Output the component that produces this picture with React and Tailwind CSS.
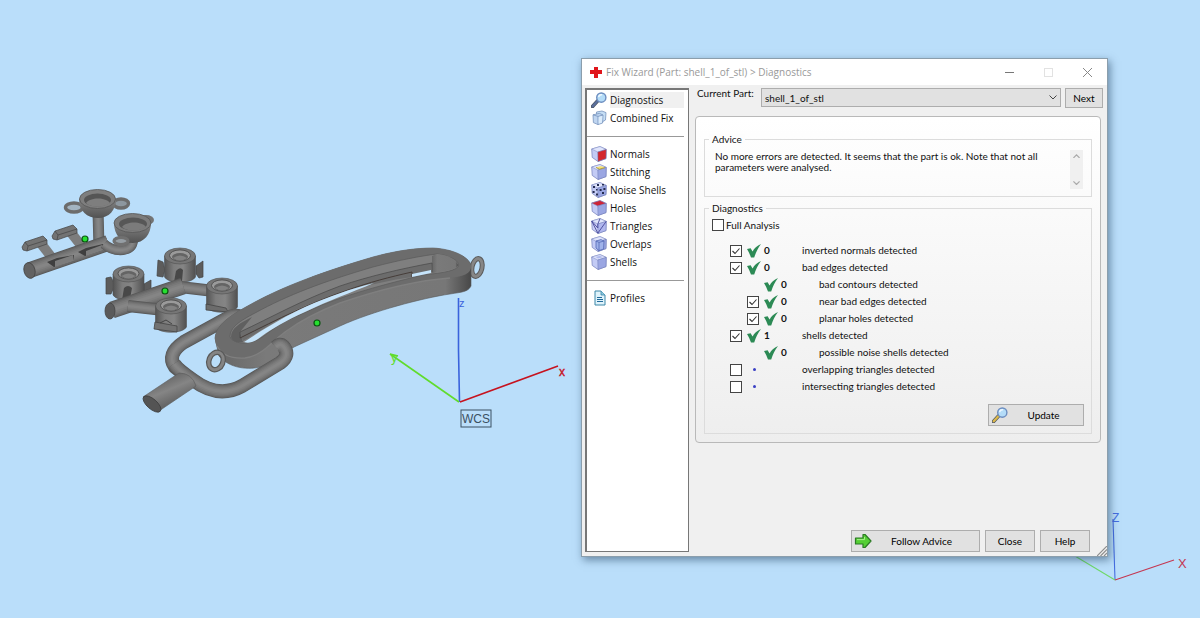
import React from 'react';

const Magnifier = ({ handle = '#5b6f9c' }) => (
    <svg viewBox="0 0 16 16" className="w-4 h-4 shrink-0">
        <path d="M1.5 14.5 L6.5 9" stroke="#4b5563" strokeWidth="3.6" strokeLinecap="round" />
        <path d="M1.7 14.2 L6.5 9" stroke={handle} strokeWidth="2.4" strokeLinecap="round" />
        <circle cx="10.3" cy="5.6" r="4.6" fill="#b4dcf8" stroke="#6d8ec0" strokeWidth="1.4" />
        <path d="M7.6 5.2 a3 3 0 0 1 3.4 -2.4" stroke="#eef8ff" strokeWidth="1.4" fill="none" />
    </svg>
);

const Cube = ({ front = '#c3cbf5', side = '#9aa6e2', top = '#e0e5fc', children }) => (
    <svg viewBox="0 0 16 16" className="w-4 h-4 shrink-0">
        <path d="M0.7 3 L9 0.6 L15.2 3.4 L15 12.6 L7 15.5 L1.2 11.4 Z" fill={front} stroke="#7480ba" strokeWidth="0.7" />
        <path d="M0.7 3 L9 0.6 L15.2 3.4 L6.8 6 Z" fill={top} stroke="#7f8ac2" strokeWidth="0.5" />
        <path d="M6.8 6 L15.2 3.4 L15 12.6 L7 15.5 Z" fill={side} stroke="#6d79b5" strokeWidth="0.5" />
        {children}
    </svg>
);

const CombinedIcon = () => (
    <svg viewBox="0 0 16 16" className="w-4 h-4 shrink-0">
        <path d="M5.5 2 L11 1 L15 2.6 L14.5 10 L11 12 L5.5 10 Z" fill="#c5def5" stroke="#7793bd" strokeWidth="0.8" />
        <path d="M2 4.8 L8.5 3.4 L12 5 L11.6 13 L7 14.6 L2.4 12.6 Z" fill="#bfd5f0" stroke="#7793bd" strokeWidth="0.8" />
        <path d="M2 4.8 L7 6.4 L12 5 M7 6.4 L7 14.6" fill="none" stroke="#7793bd" strokeWidth="0.8" />
        <path d="M7.6 7 L11.4 5.8 L11 12.6 L7.6 13.8 Z" fill="#dcecfb" />
    </svg>
);

const ProfilesIcon = () => (
    <svg viewBox="0 0 16 16" className="w-4 h-4 shrink-0">
        <path d="M4 1 H10 L14 5 V15 H4 Z" fill="#dff3fb" stroke="#3d87a8" />
        <path d="M10 1 V5 H14" fill="#8ecbe0" stroke="#3d87a8" strokeWidth="0.8" />
        <path d="M6 7.5 H11 M6 9.5 H12 M6 11.5 H12" stroke="#226a9a" strokeWidth="1.2" />
    </svg>
);

const fixItems = [
    { name: 'Normals', icon: <Cube side="#d3262c" /> },
    {
        name: 'Stitching',
        icon: (
            <Cube>
                <path d="M5 3.6 L9 5.2 L14.4 3.6 L10 2 Z" fill="#f3e27a" />
                <path d="M5 3.4 L8.4 5.2 L14 3.6" fill="none" stroke="#a8953a" strokeWidth="0.9" />
            </Cube>
        ),
    },
    {
        name: 'Noise Shells',
        icon: (
            <Cube>
                <path
                    d="M2 4h2v2h-2z M6 2h2v2h-2z M11 2h2v1.6h-2z M12.4 6h2v2h-2z M8.6 7h2v2h-2z M1.6 9h2v2h-2z M5 11.6h2v2h-2z M11 10h2v2h-2z M5 7h1.6v1.6h-1.6z"
                    fill="#252c52"
                />
            </Cube>
        ),
    },
    { name: 'Holes', icon: <Cube top="#cf2336" /> },
    {
        name: 'Triangles',
        icon: (
            <Cube front="#ccd0f6" side="#b0b7ee">
                <path d="M0.7 3 L6.8 15.2 L15.2 3.4 M0.7 3 L6.8 10 L6.8 6 M9 0.6 L6.8 6" fill="none" stroke="#46479a" strokeWidth="0.9" />
            </Cube>
        ),
    },
    {
        name: 'Overlaps',
        icon: (
            <Cube>
                <path d="M5 5 L10 3.6 L13 5 L12.6 13 L8 14.6 L5 12 Z" fill="#9fb2ea" stroke="#5468b5" strokeWidth="0.8" />
                <path d="M8 6.4 L13 5 M8 6.4 V14.6 M5 5 L8 6.4" stroke="#5468b5" strokeWidth="0.8" />
            </Cube>
        ),
    },
    {
        name: 'Shells',
        icon: (
            <Cube>
                <path d="M4.4 3 L9 1.8 L12 3.2 L7 4.6 Z" fill="#b2bcee" />
            </Cube>
        ),
    },
];

const checks = [
    { label: 'inverted normals detected', count: 0, box: true, on: true },
    { label: 'bad edges detected', count: 0, box: true, on: true },
    { label: 'bad contours detected', count: 0, nested: true },
    { label: 'near bad edges detected', count: 0, box: true, on: true, nested: true },
    { label: 'planar holes detected', count: 0, box: true, on: true, nested: true },
    { label: 'shells detected', count: 1, box: true, on: true },
    { label: 'possible noise shells detected', count: 0, nested: true },
    { label: 'overlapping triangles detected', box: true },
    { label: 'intersecting triangles detected', box: true },
];

const CheckBox = ({ id, on }) => (
    <span className="grid w-3 h-3 shrink-0">
        <input
            id={id}
            type="checkbox"
            defaultChecked={on}
            className="peer appearance-none col-start-1 row-start-1 w-3 h-3 bg-white border border-[#444]"
        />
        <svg viewBox="0 0 12 12" className="col-start-1 row-start-1 w-3 h-3 pointer-events-none invisible peer-checked:visible">
            <path d="M2.5 6 L5 8.5 L9.5 3.5" fill="none" stroke="#333" strokeWidth="1.1" />
        </svg>
    </span>
);

const GreenCheck = () => (
    <svg viewBox="0 0 14 14" className="w-3.5 h-3.5 shrink-0">
        <path d="M0 5 L3.6 4.2 L5.6 7.6 C7 4.4 10 1.6 14 0 C11 4 8.8 8.4 7.2 13.6 L4 13.6 C3 10.6 1.8 8 0 5 Z" fill="#2c8a55" />
    </svg>
);

const CheckRow = ({ row, id }) => (
    <li className={`flex items-center h-[17px] ${row.nested ? 'pl-[42px]' : 'pl-[25px]'}`}>
        {row.box ? <CheckBox id={id} on={row.on} /> : <span className="w-3" />}
        <span className="flex justify-center w-4 ml-1">
            {row.count === undefined ? <span className="w-[3px] h-[3px] rounded-full bg-[#3a3fc4]" /> : <GreenCheck />}
        </span>
        <span className="w-10 pl-[2px] font-bold">{row.count}</span>
        <label htmlFor={row.box ? id : undefined}>{row.label}</label>
    </li>
);

// A tube drawn as stacked strokes, dark at the rim and lighter towards the middle
const Tube = ({ d, w }) => (
    <g fill="none" strokeLinejoin="round">
        <path d={d} stroke="#585858" strokeWidth={w} />
        <path d={d} stroke="#666" strokeWidth={w * 0.9} />
        <path d={d} stroke="#707070" strokeWidth={w * 0.75} />
        <path d={d} stroke="#787878" strokeWidth={w * 0.58} />
        <path d={d} stroke="#7f7f7f" strokeWidth={w * 0.4} />
        <path d={d} stroke="#858585" strokeWidth={w * 0.2} />
    </g>
);

const Marker = ({ x, y }) => <circle cx={x} cy={y} r="3" fill="#25e02f" stroke="#0b5410" strokeWidth="1.2" />;

const Cylinder = ({ x, y }) => (
    <g transform={`translate(${x} ${y})`}>
        <path d="M-15.5 0 V21 C-12 28 12 28 15.5 21 V0 Z" fill="url(#round)" stroke="#505050" strokeWidth="0.6" />
        <ellipse rx="15.5" ry="8" fill="#767676" stroke="#505050" strokeWidth="0.6" />
        <ellipse cy="-0.5" rx="10.5" ry="5.6" fill="#9a9a9a" stroke="#454545" strokeWidth="0.8" />
        <ellipse cy="1" rx="8" ry="4" fill="#646464" />
        <path d="M-7 2 Q0 -3 7 2 Q0 7 -7 2 Z" fill="#828282" />
    </g>
);

const SmallBar = ({ x, y }) => (
    <g transform={`translate(${x} ${y})`} stroke="#444" strokeWidth="0.7">
        <path d="M13 5 L24 19 L34 16 L24 3 Z" fill="#7c7c7c" stroke="none" />
        <path d="M0 8 L3 3 L21 -3 L25 1 L25 5 L5 12 L1 11 Z" fill="#737373" />
        <path d="M3 3 L6 7 L25 1 M6 7 L5 12" fill="none" />
    </g>
);

const Scene = () => (
    <svg viewBox="0 0 1200 618" preserveAspectRatio="xMinYMin meet" className="block w-full h-full" fontFamily="Liberation Sans, sans-serif">
        <defs>
            <linearGradient id="round">
                <stop offset="0" stopColor="#535353" />
                <stop offset="0.3" stopColor="#7d7d7d" />
                <stop offset="0.6" stopColor="#858585" />
                <stop offset="1" stopColor="#505050" />
            </linearGradient>
            <linearGradient id="bowl" x2="0" y2="1">
                <stop offset="0" stopColor="#848484" />
                <stop offset="1" stopColor="#525252" />
            </linearGradient>
            <linearGradient id="stem" x1="0.2" y1="0" x2="0.8" y2="1">
                <stop offset="0.15" stopColor="#636363" />
                <stop offset="0.45" stopColor="#858585" />
                <stop offset="0.85" stopColor="#585858" />
            </linearGradient>
            <linearGradient id="wall">
                <stop offset="0" stopColor="#666" />
                <stop offset="0.2" stopColor="#7a7a7a" />
                <stop offset="0.9" stopColor="#777" />
                <stop offset="1" stopColor="#484848" />
            </linearGradient>
        </defs>

        {/* sprue with two cups */}
        <g>
            <Tube d="M98 212 L99 246" w={11} />
            <ellipse cx="74" cy="207.500" rx="8.500" ry="4.500" fill="#a3b4c1" stroke="#6c6c6c" strokeWidth="3.4" />
            <ellipse cx="121" cy="203.500" rx="7.500" ry="4.500" fill="#8d979f" stroke="#6c6c6c" strokeWidth="3.4" />
            <path d="M79 199 C79 211 87 218 98 218 C109 218 116 210 116 199 Z" fill="url(#bowl)" />
            <ellipse cx="97.500" cy="199" rx="18" ry="9.500" fill="#7e7e7e" stroke="#555" strokeWidth="0.8" />
            <ellipse cx="97.500" cy="200" rx="13.500" ry="6.500" fill="#555" />
            <path d="M86 203 C90 197 106 197 110 203 C104 208 91 208 86 203 Z" fill="#7e7e7e" />
            <SmallBar x={22} y={239} />
            <SmallBar x={52} y={228} />
            <Tube d="M30 270 L108 243" w={16} />
            <ellipse cx="29.500" cy="270.500" rx="5.500" ry="8" fill="#626262" stroke="#444" strokeWidth="0.8" transform="rotate(-15 29.500 270.500)" />
            <path d="M47 262 L57 258 L74 255 L74 261 L54 267 Z M78 252 L86 248 L103 244 L104 250 L85 256 Z" fill="#3f3f3f" />
            <path d="M55 261 L73 255 L74 261 L55 267 Z M86 251 L102 245 L104 250 L86 256 Z" fill="#7c7c7c" />
            <Tube d="M104 244 Q112 251 123 250 Q132 249 133 241" w={10} />
            <ellipse cx="146" cy="220" rx="8" ry="5" fill="#737373" />
            <path d="M114 223 C114 236 122 243 133 243 C144 243 151 234 151 223 Z" fill="url(#bowl)" />
            <ellipse cx="132.500" cy="223" rx="18.500" ry="9.500" fill="#7c7c7c" stroke="#555" strokeWidth="0.8" />
            <ellipse cx="133" cy="224" rx="14" ry="6.500" fill="#575757" />
            <path d="M122 227 C126 221 142 221 146 227 C139 232 128 232 122 227 Z" fill="#7b7b7b" />
            <ellipse cx="121" cy="241" rx="7" ry="3.500" fill="#969ea4" stroke="#707070" strokeWidth="3.2" />
            <Marker x={85} y={239} />
        </g>

        {/* sprue with four bushings */}
        <g>
            <path d="M106 278 L111 277 L114 283 L114 287 L111 294 L106 294 Z M144 284 L151 280 V289 L144 291 Z" fill="#5c5c5c" stroke="#444" strokeWidth="0.7" />
            <path d="M158 260 L163 262 L165 270 L163 277 L157 276 Z M196 266 L203 261 V277 L199 278 L196 274 Z" fill="#5c5c5c" stroke="#444" strokeWidth="0.7" />
            <Cylinder x={128.5} y={274} />
            <Cylinder x={180} y={256} />
            <path d="M124 288 Q128 284 132 288 L130 299 L122 300 Z M176 271 Q180 266 183 270 L182 281 L174 282 Z" fill="#484848" />
            <Tube d="M180 287 L214 291" w={12} />
            <Tube d="M112 310 L183 286" w={17} />
            <Tube d="M128 306 L164 310" w={12} />
            <ellipse cx="110" cy="311" rx="5" ry="8" fill="#5a5a5a" stroke="#444" strokeWidth="0.8" />
            <Cylinder x={222} y={286} />
            <path d="M206 304 L226 308 L228 312 L206 310 Z" fill="#6c6c6c" stroke="#444" strokeWidth="0.8" />
            <Cylinder x={171} y={306} />
            <path d="M155 322 L177 326 L177 332 L154 329 Z" fill="#727272" stroke="#444" strokeWidth="0.8" />
            <path d="M160 323 L166 320 L172 324" fill="none" stroke="#444" />
            <Marker x={165} y={291} />
        </g>

        {/* long slotted frame, its handle and rings */}
        <g>
            <ellipse cx="477" cy="267.500" rx="5" ry="9" fill="none" stroke="#5a5a5a" strokeWidth="5" transform="rotate(12 477 267.500)" />
            <ellipse cx="477" cy="267.500" rx="5" ry="9" fill="none" stroke="#868686" strokeWidth="3" transform="rotate(12 477 267.500)" />
            <Tube d="M243 318 Q236 313 226 319 L184 342 Q166 354 175 367 L184 374" w={14} />
            <path
                d="M215 338 C217 322 235 313 255 302 C285 286 322 272 373 257 C395 251 415 248 433 248 C452 249 468 256 471 265 L471 286 C468 292 462 292 450 294 C423 298 373 311 340 326 L294 347 L264 366 C248 371 229 368 219 356 Z"
                fill="url(#wall)"
                stroke="#585858"
                strokeWidth="0.6"
            />
            <path
                d="M215 338 C217 322 235 313 255 302 C285 286 322 272 373 257 C395 251 415 248 433 248 C452 249 468 256 471 265 C472 273 465 276 450 278 C423 280 390 286 340 303 C322 310 300 321 285 332 C270 343 262 356 245 358 C228 359 214 349 215 338 Z"
                fill="#6c6c6c"
            />
            <path d="M217 346 C222 355 232 359 245 358 C262 356 270 343 285 332 C300 321 322 310 340 303 C390 286 423 280 450 278" fill="none" stroke="#7f7f7f" strokeWidth="1.4" />
            <path
                d="M230 337 C230 327 240 321 255 313 C288 295 322 282 373 267 C400 260 420 256 437 254 C452 256 461 262 458 267 C452 272 440 273 423 275 C390 283 355 292 322 305 L288 320 C272 328 265 337 255 341 C245 345 233 343 230 337 Z"
                fill="#7f7f7f"
                stroke="#5a5a5a"
                strokeWidth="0.7"
            />
            <path d="M231 337 C231 328 240 323 252 317 L240 332 L243 342 C236 343 232 341 231 337 Z" fill="#606060" />
            <path d="M432 256 V273 C450 271 458 268 458 265 C456 259 448 255 437 254 Z" fill="url(#wall)" />
            <path d="M240 332 C272 317 300 301 340 286 C370 276 400 269 432 263 L431 272 L412 277 C370 283 320 297 288 314 L243 341 Z" fill="#6c6c6c" />
            <path d="M240 338 V332 C272 317 300 301 340 286 C370 276 400 269 432 263 V272" fill="none" stroke="#484848" strokeWidth="0.7" />
            <path d="M240 338 C280 318 310 303 345 291 C370 282 390 277 412 272 V277" fill="none" stroke="#463d39" strokeWidth="1" />
            <path d="M244 342 C262 330 285 316 305 307 C330 296 350 289 374 283 C350 293 330 300 305 312 C285 321 272 329 262 336 C256 341 250 344 244 342 Z M412 274 L431 270 V273 L412 277 Z" fill="#c5e4fb" />
            <ellipse cx="216" cy="361" rx="7" ry="9" fill="none" stroke="#5a5a5a" strokeWidth="5.4" transform="rotate(22 216 361)" />
            <ellipse cx="216" cy="361" rx="7" ry="9" fill="none" stroke="#848484" strokeWidth="3" transform="rotate(22 216 361)" />
            <Tube d="M174 364 Q178 370 193 380 Q218 399 242 386 L280 363 Q291 355 283 346 Q280 343 276 347" w={14} />
            <path d="M179 373 Q192 373 196 386 L159 411 L143 397 Z" fill="url(#stem)" stroke="#5a5a5a" strokeWidth="0.6" />
            <ellipse cx="152" cy="404" rx="11" ry="5" fill="#545454" stroke="#3c3c3c" strokeWidth="0.8" transform="rotate(41 152 404)" />
            <Marker x={317} y={323} />
        </g>

        {/* work coordinate system */}
        <g fill="none" strokeWidth="1.6">
            <path d="M458.500 298 V350 L459.500 402" stroke="#3a63dc" />
            <path d="M459 402 L390 354 L398 356" stroke="#60dc2c" />
            <path d="M460 402 L558 366" stroke="#c6131f" />
            <rect x="461" y="410" width="30" height="17" stroke="#3a5062" strokeWidth="1" />
        </g>
        <text x="459" y="307" fontSize="11" fill="#3a63dc">z</text>
        <text x="391" y="362" fontSize="13" fill="#60dc2c">y</text>
        <text x="559" y="376" fontSize="12" fill="#c6131f" stroke="#c6131f" strokeWidth="0.4">x</text>
        <text x="462" y="423" fontSize="12" fill="#3a5062">WCS</text>

        {/* view axes in the corner */}
        <g fill="none" strokeWidth="1.1">
            <path d="M1113 519 L1115 580" stroke="#456de0" />
            <path d="M1115 580 L1070 553" stroke="#6fd968" />
            <path d="M1115 580 L1174 560" stroke="#c43650" />
        </g>
        <text x="1112" y="522" fontSize="12" fill="#456de0">Z</text>
        <text x="1178" y="568" fontSize="13" fill="#c43650">X</text>
    </svg>
);

const button = 'flex items-center border border-[#adadad] bg-[#e1e1e1] text-black';
const navButton = 'flex items-center w-full h-[18px] pl-1 gap-[3px] whitespace-nowrap';

const FixWizard = () => (
    <section className="absolute left-[581px] top-[58px] w-[527px] flex flex-col bg-[#f0f0f0] border border-[#8b9eac] shadow-[2px_3px_8px_rgba(20,50,80,0.5)] text-[10px] leading-[11px] text-[#111]">
        <header className="flex items-center h-[26px] pl-2 pr-3.5 bg-white text-[#999]">
            <svg viewBox="0 0 12 12" className="w-3 h-3 mr-1">
                <path d="M4 1 H8 V4 H12 V8 H8 V12 H4 V8 H0 V4 H4 Z" fill="#e0151b" />
            </svg>
            <h1 className="flex-1">Fix Wizard (Part: shell_1_of_stl) &gt; Diagnostics</h1>
            <div className="flex items-center gap-7">
                <button aria-label="Minimize">
                    <svg viewBox="0 0 11 11" className="w-[11px] h-[11px]"><path d="M1 5.500 H10" stroke="#777" /></svg>
                </button>
                <button aria-label="Maximize">
                    <svg viewBox="0 0 11 11" className="w-[11px] h-[11px]"><rect x="1.500" y="1.500" width="8" height="8" fill="none" stroke="#e2e2e2" /></svg>
                </button>
                <button aria-label="Close window">
                    <svg viewBox="0 0 11 11" className="w-[11px] h-[11px]"><path d="M1 1 L10 10 M10 1 L1 10" stroke="#888" /></svg>
                </button>
            </div>
        </header>

        <div className="flex pt-[3px] pl-[3px] pb-1">
            <nav className="w-[104px] shrink-0 bg-white border border-t-2 border-l-2 border-[#777] pt-px pr-1">
                <button className={navButton}>
                    <Magnifier />
                    <span className="flex-1 leading-4 text-left bg-[#f0f0f0]">Diagnostics</span>
                </button>
                <button className={navButton}><CombinedIcon />Combined Fix</button>
                <div className="flex items-center h-[18px]"><hr className="flex-1 border-[#999]" /></div>
                {fixItems.map((item) => (
                    <button key={item.name} className={navButton}>
                        {item.icon}
                        {item.name}
                    </button>
                ))}
                <div className="flex items-center h-[18px]"><hr className="flex-1 border-[#999]" /></div>
                <button className={navButton}><ProfilesIcon />Profiles</button>
            </nav>

            <main className="flex-1 flex flex-col pl-[6px] pr-[4px] font-[Lato,'Open_Sans',sans-serif]">
                <div className="flex items-start h-7">
                    <label htmlFor="part" className="w-[66px] pl-0.5 whitespace-nowrap">Current Part:</label>
                    <span className="flex-1 grid items-center">
                        <select id="part" className="appearance-none col-start-1 row-start-1 h-[19px] pl-[3px] leading-4 border border-[#adadad] bg-[#e1e1e1]">
                            <option>shell_1_of_stl</option>
                        </select>
                        <svg viewBox="0 0 8 5" className="col-start-1 row-start-1 justify-self-end w-2 mr-1 pointer-events-none">
                            <path d="M0.500 0.500 L4 4 L7.500 0.500" fill="none" stroke="#444" />
                        </svg>
                    </span>
                    <button className={`${button} justify-center w-[38px] h-5 ml-1`}>Next</button>
                </div>

                <div className="flex flex-col gap-[11px] mr-[2px] px-2 pt-[22px] pb-2 rounded-[4px] border border-[#b9b9b9] bg-linear-to-b from-white to-[#eeeeee]">
                    <section className="h-[58px] border border-[#dcdcdc]">
                        <h2 className="w-fit -mt-[6px] ml-1 px-[3px] bg-[#fdfdfd]">Advice</h2>
                        <div className="flex justify-between pl-[10px] pr-2 pt-[5px]">
                            <p className="w-[335px] pt-px">
                                No more errors are detected. It seems that the part is ok. Note that not all parameters were analysed.
                            </p>
                            <div className="flex flex-col justify-between items-center w-[13px] h-[39px] py-1 bg-[#f0f0f0]">
                                <svg viewBox="0 0 8 5" className="w-[7px]"><path d="M0.500 4.500 L4 1 L7.500 4.500" fill="none" stroke="#aaa" strokeWidth="1.400" /></svg>
                                <svg viewBox="0 0 8 5" className="w-[7px]"><path d="M0.500 0.500 L4 4 L7.500 0.500" fill="none" stroke="#aaa" strokeWidth="1.400" /></svg>
                            </div>
                        </div>
                    </section>

                    <section className="border border-[#dcdcdc] pb-[7px]">
                        <h2 className="w-fit -mt-[6px] ml-1 px-[3px] bg-[#fafafa]">Diagnostics</h2>
                        <div className="flex items-center gap-0.5 h-[18px] mt-[2px] pl-[7px]">
                            <CheckBox id="full" />
                            <label htmlFor="full">Full Analysis</label>
                        </div>
                        <ul className="mt-2">
                            {checks.map((row, i) => (
                                <CheckRow key={row.label} row={row} id={`check-${i}`} />
                            ))}
                        </ul>
                        <button className={`${button} w-24 h-[22px] mt-[9px] ml-auto mr-[7px] pl-[3px]`}>
                            <Magnifier handle="#dcb84a" />
                            <span className="flex-1 pr-1">Update</span>
                        </button>
                    </section>
                </div>

                <div className="flex justify-end gap-[5px] mt-[87px] pr-[13px]">
                    <button className={`${button} w-[129px] h-[22px] pl-0.5`}>
                        <svg viewBox="0 0 18 16" className="w-[18px] h-4 shrink-0">
                            <path d="M1.500 5 H9 V1.500 H11 L17 8 L11 14.500 H9 V11 H1.500 Z" fill="#55cf35" stroke="#2b7a24" strokeWidth="1.200" strokeLinejoin="round" />
                            <path d="M3 6.600 H10.500 V4" fill="none" stroke="#a6ee8b" />
                        </svg>
                        <span className="flex-1 pr-2">Follow Advice</span>
                    </button>
                    <button className={`${button} justify-center w-[50px] h-[22px]`}>Close</button>
                    <button className={`${button} justify-center w-[50px] h-[22px]`}>Help</button>
                </div>
            </main>
        </div>
        <svg viewBox="0 0 10 10" className="absolute right-0 bottom-0 w-2.5 h-2.5">
            <path d="M0 10 L10 0 M3.500 10 L10 3.500 M7 10 L10 7" stroke="#8d8d8d" strokeWidth="1.200" />
        </svg>
    </section>
);

const App = () => (
    <div className="relative w-full h-screen overflow-hidden bg-[#badefa] font-['Open_Sans','Noto_Sans',sans-serif]">
        <Scene />
        <FixWizard />
    </div>
);

export default App;
